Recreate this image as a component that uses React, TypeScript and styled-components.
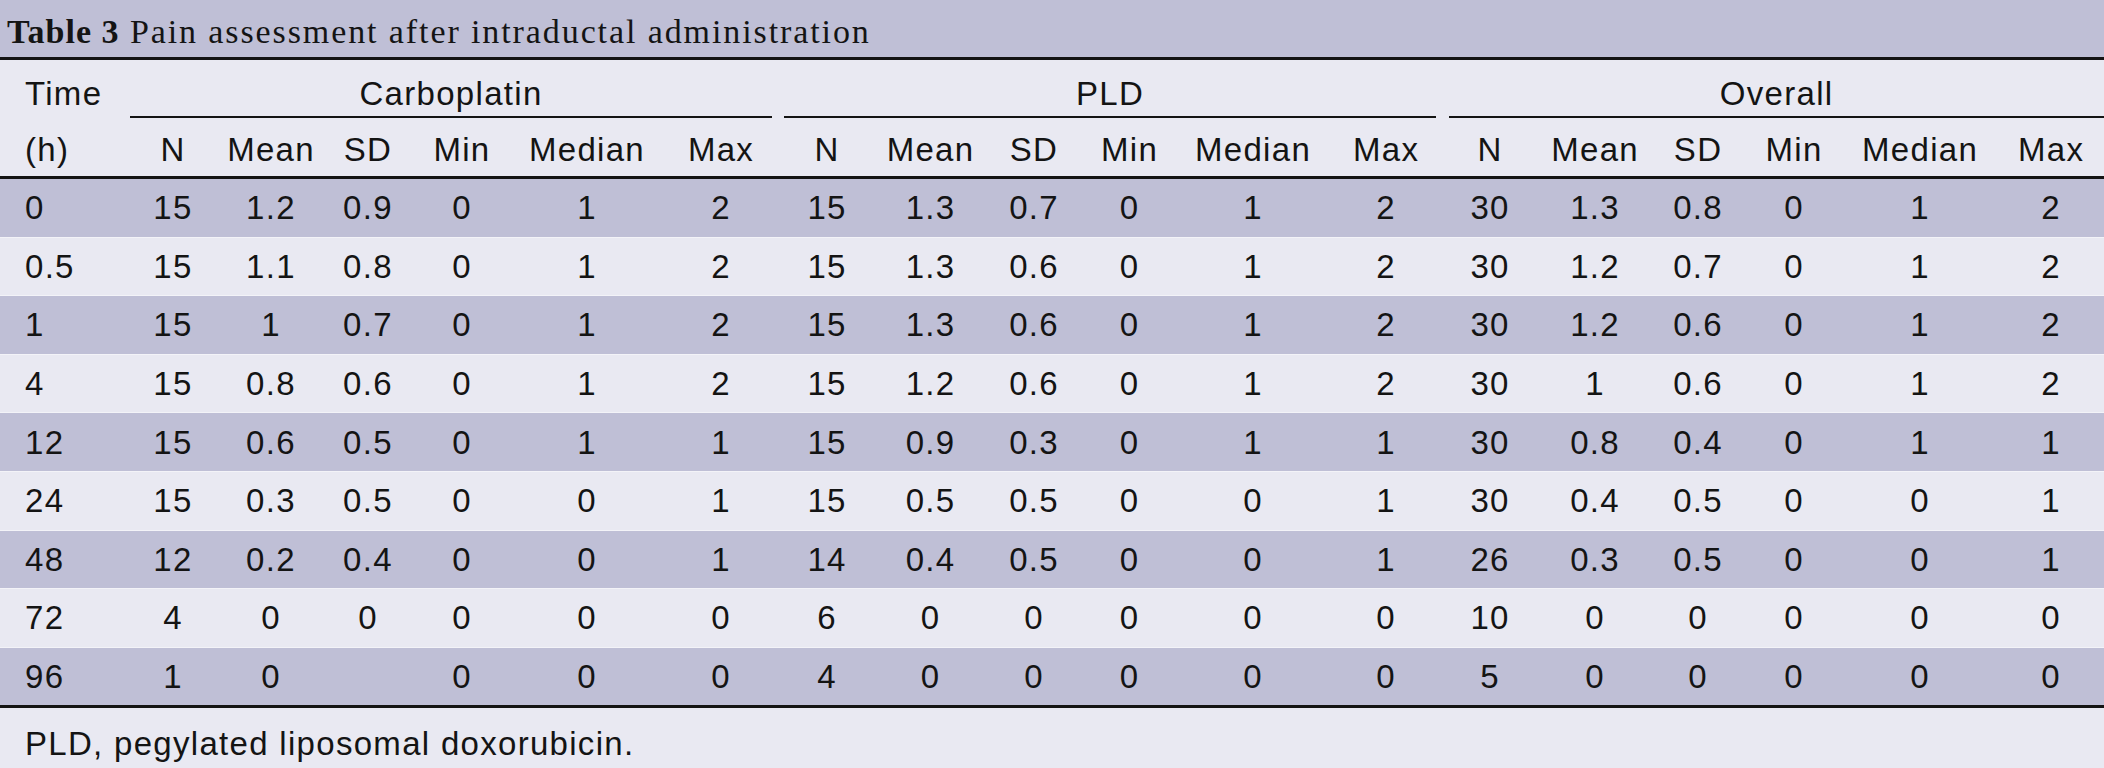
import React from "react";
import styled, { createGlobalStyle } from "styled-components";

const GlobalStyle = createGlobalStyle`
    body {
        margin: 0;
        background: #e9e9f2;
    }
`;

const colors = {
    band: "#bfbfd6",
    light: "#e9e9f2",
    rule: "#141414",
    text: "#141414",
};

// widths measured off the reference, per column
const timeWidth = 124;
const groupWidths = [
    [98, 98, 96, 92, 158, 110],
    [102, 105, 102, 89, 158, 108],
    [100, 110, 96, 96, 156, 106],
];

type Group = { name: string; inset: string };

const groups: Group[] = [
    { name: "Carboplatin", inset: "0 4px 0 6px" },
    { name: "PLD", inset: "0 4px 0 8px" },
    { name: "Overall", inset: "0 0 0 9px" },
];

const stats = ["N", "Mean", "SD", "Min", "Median", "Max"];

const rows: [string, ...string[]][] = [
    ["0", "15", "1.2", "0.9", "0", "1", "2", "15", "1.3", "0.7", "0", "1", "2", "30", "1.3", "0.8", "0", "1", "2"],
    ["0.5", "15", "1.1", "0.8", "0", "1", "2", "15", "1.3", "0.6", "0", "1", "2", "30", "1.2", "0.7", "0", "1", "2"],
    ["1", "15", "1", "0.7", "0", "1", "2", "15", "1.3", "0.6", "0", "1", "2", "30", "1.2", "0.6", "0", "1", "2"],
    ["4", "15", "0.8", "0.6", "0", "1", "2", "15", "1.2", "0.6", "0", "1", "2", "30", "1", "0.6", "0", "1", "2"],
    ["12", "15", "0.6", "0.5", "0", "1", "1", "15", "0.9", "0.3", "0", "1", "1", "30", "0.8", "0.4", "0", "1", "1"],
    ["24", "15", "0.3", "0.5", "0", "0", "1", "15", "0.5", "0.5", "0", "0", "1", "30", "0.4", "0.5", "0", "0", "1"],
    ["48", "12", "0.2", "0.4", "0", "0", "1", "14", "0.4", "0.5", "0", "0", "1", "26", "0.3", "0.5", "0", "0", "1"],
    ["72", "4", "0", "0", "0", "0", "0", "6", "0", "0", "0", "0", "0", "10", "0", "0", "0", "0", "0"],
    ["96", "1", "0", "", "0", "0", "0", "4", "0", "0", "0", "0", "0", "5", "0", "0", "0", "0", "0"],
];

export default function App() {
    return (
        <>
            <GlobalStyle />
            <Sheet>
                <Caption>
                    <CaptionLabel>Table 3</CaptionLabel> Pain assessment after intraductal administration
                </Caption>
                <Grid>
                    <colgroup>
                        <col style={{ width: timeWidth }} />
                        {groupWidths.flat().map((w, i) => (
                            <col key={i} style={{ width: w }} />
                        ))}
                    </colgroup>
                    <thead>
                        <tr>
                            <TimeHead>Time</TimeHead>
                            {groups.map((g) => (
                                <GroupCell key={g.name} colSpan={6}>
                                    <GroupLabel $inset={g.inset}>{g.name}</GroupLabel>
                                </GroupCell>
                            ))}
                        </tr>
                        <tr>
                            <SubHead $left>(h)</SubHead>
                            {groups.map((g) =>
                                stats.map((s) => <SubHead key={g.name + s}>{s}</SubHead>)
                            )}
                        </tr>
                    </thead>
                    <tbody>
                        {rows.map((r, i) => (
                            <BodyRow key={r[0]} $shaded={i % 2 === 0}>
                                {r.map((v, j) => (
                                    <Cell key={j} $left={j === 0} $last={i === rows.length - 1}>
                                        {v}
                                    </Cell>
                                ))}
                            </BodyRow>
                        ))}
                    </tbody>
                </Grid>
                <Footnote>PLD, pegylated liposomal doxorubicin.</Footnote>
            </Sheet>
        </>
    );
}

const Sheet = styled.div`
    width: 2104px;
    height: 768px;
    overflow: hidden;
    background: ${colors.light};
    color: ${colors.text};
    font-family: "Liberation Sans", Arial, sans-serif;
    font-size: 33px;
    letter-spacing: 1.3px;
`;

const Caption = styled.div`
    box-sizing: border-box;
    height: 60px;
    padding: 14.5px 0 0 7px;
    background: ${colors.band};
    border-bottom: 3px solid ${colors.rule};
    font-family: "Liberation Serif", "Times New Roman", serif;
    font-size: 34px;
    line-height: 34px;
    letter-spacing: 1.9px;
    white-space: nowrap;
`;

const CaptionLabel = styled.b`
    font-weight: 700;
    letter-spacing: 1px;
`;

const Grid = styled.table`
    width: 2104px;
    table-layout: fixed;
    border-collapse: separate;
    border-spacing: 0;
`;

const TimeHead = styled.th`
    padding: 15px 0 6px 25px;
    line-height: 37px;
    font-weight: 400;
    text-align: left;
    vertical-align: top;
`;

const GroupCell = styled.th`
    padding: 0;
    font-weight: 400;
    vertical-align: top;
`;

const GroupLabel = styled.div<{ $inset: string }>`
    margin: ${(p) => p.$inset};
    padding: 15px 0 4px;
    line-height: 37px;
    text-align: center;
    border-bottom: 2px solid ${colors.rule};
`;

const SubHead = styled.th<{ $left?: boolean }>`
    padding: 13px 0 8px ${(p) => (p.$left ? "25px" : "0")};
    line-height: 37px;
    font-weight: 400;
    text-align: ${(p) => (p.$left ? "left" : "center")};
    white-space: nowrap;
    border-bottom: 3px solid ${colors.rule};
`;

const BodyRow = styled.tr<{ $shaded: boolean }>`
    background: ${(p) => (p.$shaded ? colors.band : colors.light)};
`;

const Cell = styled.td<{ $left: boolean; $last: boolean }>`
    padding: 10.3px 0 10.3px ${(p) => (p.$left ? "25px" : "0")};
    line-height: 37px;
    text-align: ${(p) => (p.$left ? "left" : "center")};
    white-space: nowrap;
    border-bottom: ${(p) => (p.$last ? `3px solid ${colors.rule}` : "1px solid #f3f3f8")};
`;

const Footnote = styled.div`
    padding: 16.6px 0 0 25px;
    line-height: 37px;
`;
